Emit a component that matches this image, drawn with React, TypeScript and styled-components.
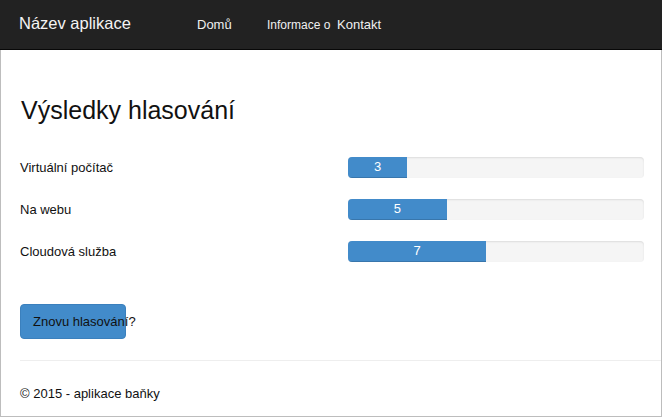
import React from "react";
import styled, { createGlobalStyle } from "styled-components";

const Global = createGlobalStyle`
  html, body { margin: 0; padding: 0; background: #fff; }
  body { font-family: "Liberation Sans", Arial, sans-serif; color: #222; }
`;

const Frame = styled.div`
  width: 662px;
  height: 417px;
  display: flex;
  flex-direction: column;
  box-sizing: border-box;
  overflow: hidden;
`;

const Navbar = styled.header`
  height: 50px;
  box-sizing: border-box;
  background: #222;
  border-bottom: 1px solid #080808;
  display: flex;
  align-items: center;
  padding-left: 19px;
`;

const Brand = styled.a`
  width: 178px;
  font-size: 16.5px;
  color: #f4f4f4;
  text-decoration: none;
  margin-top: -3px;
`;

const NavList = styled.nav`
  display: grid;
  grid-template-columns: repeat(3, 70px);
`;

const NavLink = styled.a<{ $small?: boolean }>`
  font-size: ${(p) => (p.$small ? "12px" : "13px")};
  color: #f0f0f0;
  white-space: nowrap;
  text-decoration: none;
  margin-top: ${(p) => (p.$small ? "1px" : "0")};
`;

const Main = styled.main`
  flex: 1;
  border-left: 1px solid #bdbdbd;
  border-right: 1px solid #bdbdbd;
  border-bottom: 1px solid #bdbdbd;
  padding: 0 0 0 18px;
  display: flex;
  flex-direction: column;
`;

const Title = styled.h1`
  margin: 47px 0 0 2px;
  font-size: 25px;
  font-weight: normal;
  line-height: 26px;
  color: #111;
`;

const Results = styled.div`
  margin-top: 34px;
  display: grid;
  grid-template-columns: 329px 296px;
  row-gap: 21px;
  align-items: center;
`;

const Label = styled.div`
  font-size: 13px;
  color: #111;
  line-height: 18px;
  padding-left: 1px;
`;

const Track = styled.div`
  height: 21px;
  border-radius: 4px;
  background: #f5f5f5;
  box-shadow: inset 0 1px 2px rgba(0, 0, 0, 0.1);
  overflow: hidden;
`;

const Fill = styled.div`
  height: 100%;
  background: #428bca;
  box-shadow: inset 0 -1px 0 rgba(0, 0, 0, 0.15);
  color: #fff;
  font-size: 13px;
  line-height: 19px;
  text-align: center;
`;

const VoteButton = styled.button`
  margin-top: 42px;
  margin-left: 1px;
  width: 106px;
  height: 35px;
  box-sizing: border-box;
  padding: 6px 12px;
  background: #428bca;
  border: 1px solid #3b80bd;
  border-radius: 4px;
  font-family: "Liberation Sans", Arial, sans-serif;
  font-size: 13px;
  color: #111;
  text-align: left;
  white-space: nowrap;
  overflow: visible;
`;

const Rule = styled.hr`
  margin: 21px 0 0 1px;
  border: 0;
  border-top: 1px solid #eee;
`;

const Footer = styled.footer`
  margin: 24px 0 0 1px;
  font-size: 13px;
  line-height: 18px;
  color: #111;
`;

const votes = [
  { label: "Virtuální počítač", count: 3 },
  { label: "Na webu", count: 5 },
  { label: "Cloudová služba", count: 7 },
];

export default function App() {
  const total = votes.reduce((s, v) => s + v.count, 0);
  return (
    <Frame>
      <Global />
      <Navbar>
        <Brand>Název aplikace</Brand>
        <NavList>
          <NavLink>Domů</NavLink>
          <NavLink $small>Informace o</NavLink>
          <NavLink>Kontakt</NavLink>
        </NavList>
      </Navbar>
      <Main>
        <Title>Výsledky hlasování</Title>
        <Results>
          {votes.map((v) => (
            <React.Fragment key={v.label}>
              <Label>{v.label}</Label>
              <Track>
                <Fill style={{ width: `${(v.count / total) * 100}%` }}>{v.count}</Fill>
              </Track>
            </React.Fragment>
          ))}
        </Results>
        <div>
          <VoteButton>Znovu hlasování?</VoteButton>
        </div>
        <Rule />
        <Footer>© 2015 - aplikace baňky</Footer>
      </Main>
    </Frame>
  );
}
